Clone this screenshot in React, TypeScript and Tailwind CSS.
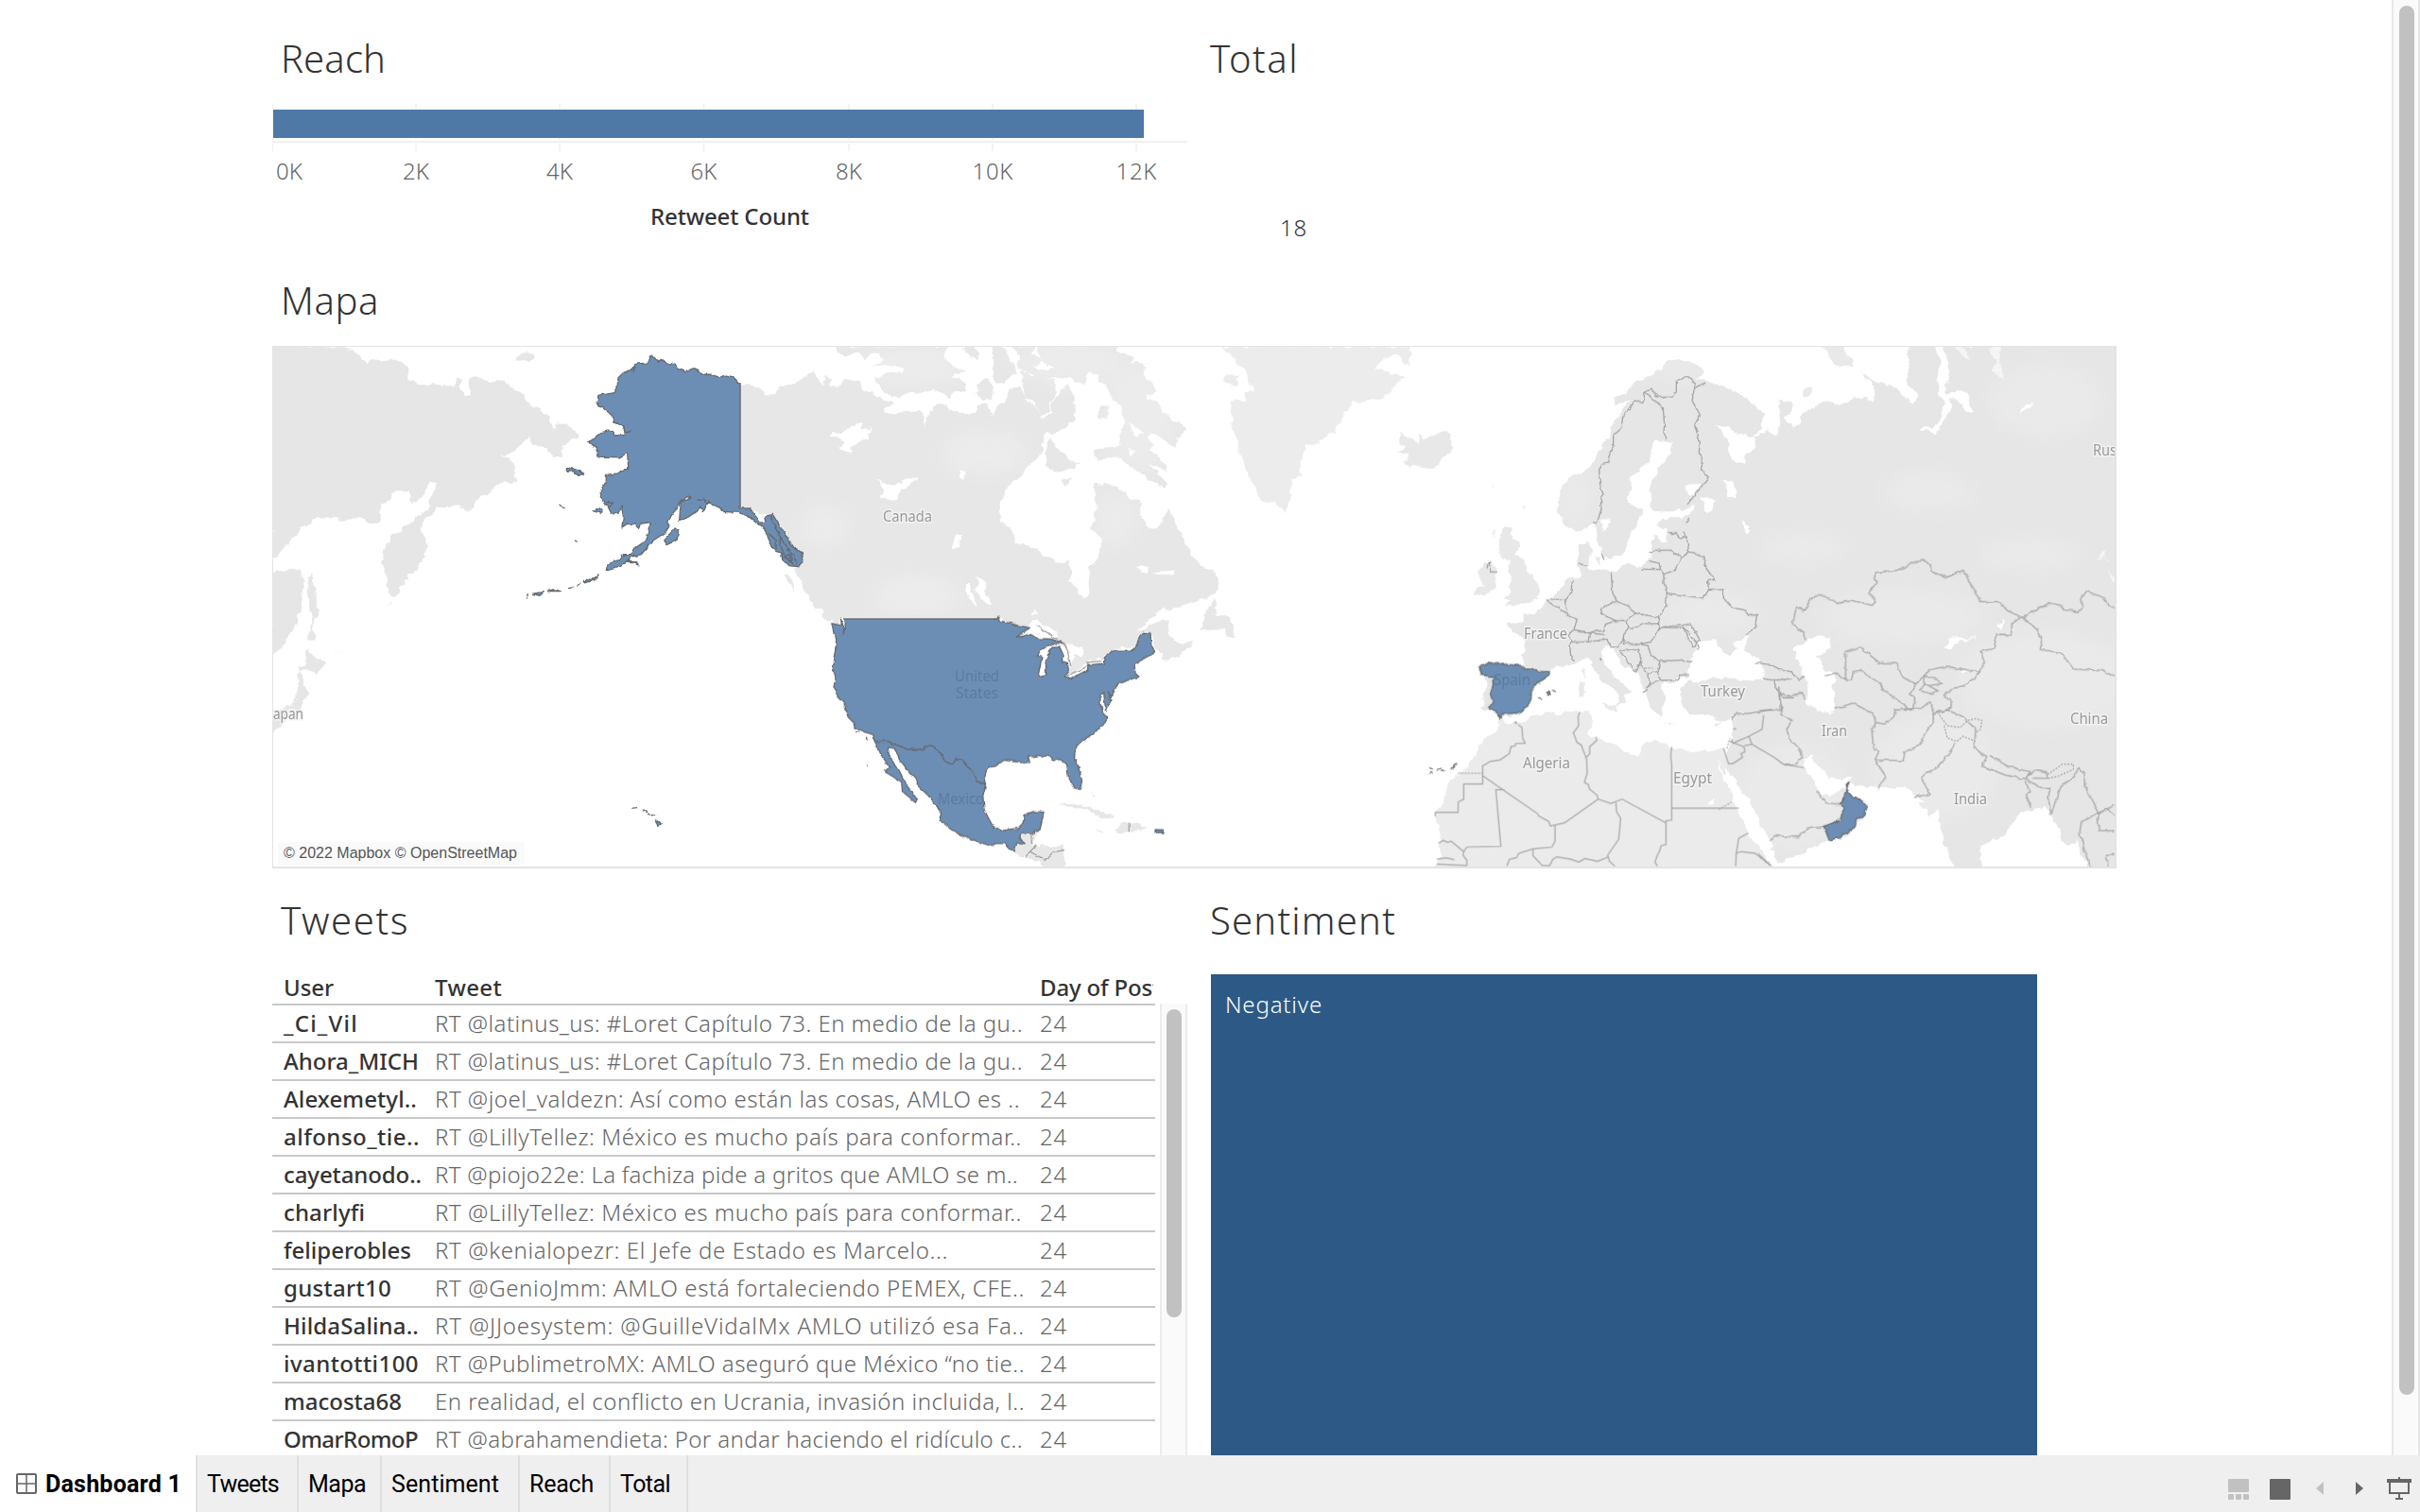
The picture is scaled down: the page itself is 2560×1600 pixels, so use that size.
import { useLayoutEffect, useRef, useState } from "react";

/* Text run whose tracking is adjusted to a given advance width. */
function Fit({ w, className = "", children }: { w: number; className?: string; children: string }) {
  const ref = useRef<HTMLSpanElement>(null);
  const [spacing, setSpacing] = useState(0);
  useLayoutEffect(() => {
    const el = ref.current;
    if (!el) return;
    setSpacing((w - el.getBoundingClientRect().width) / children.length);
  }, []);
  return (
    <span ref={ref} className={"inline-block whitespace-pre " + className} style={{ letterSpacing: spacing }}>
      {children}
    </span>
  );
}

function Title({ w, children }: { w: number; children: string }) {
  return (
    <h2 className="h-[60px] text-[40px] leading-[63px] font-[340] text-[#333]">
      <Fit w={w}>{children}</Fit>
    </h2>
  );
}

const axis: [string, number, number][] = [
  ["0K", 306, 28],
  ["2K", 440, 28],
  ["4K", 592, 28],
  ["6K", 744.5, 28],
  ["8K", 898, 28],
  ["10K", 1050, 43],
  ["12K", 1202, 43],
];
const grid = [288.5, 440, 592, 744.5, 898, 1050, 1202];

function ReachChart() {
  return (
    <svg className="block h-[150px] w-[968px]" viewBox="288 110 968 150">
      {grid.map((x) => (
        <path key={x} d={`M${x} 110V148M${x} 152V160`} stroke="#f0f0f0" strokeWidth="1.5" />
      ))}
      <rect x="288" y="149" width="968" height="2" fill="#f0f0f0" />
      <rect x="289" y="116" width="921" height="30" fill="#4e79a7" />
      {axis.map(([t, x, w]) => (
        <text key={t} x={x - w / 2} y="190" textLength={w} className="text-[24px] font-[350]" fill="#666">
          {t}
        </text>
      ))}
      <text x="688" y="238" textLength="168" className="text-[24px] font-medium" fill="#333">
        Retweet Count
      </text>
    </svg>
  );
}

const A = "translate(270 350) scale(.42092 .3699)";
const B = "translate(860 350) scale(.42092 .3699)";
const C = "translate(1480 350) scale(.33333 .3699)";
const D = "translate(1860 350) scale(.33333 .3699)";

const landA =
  "M40 40L245 50 270 75 280 95 320 83 355 83 383 105 383 140 410 152 450 150 460 155 500 155 505 135 520 142 515 165 525 185 540 185 538 130 560 138 612 142 655 172 700 215 740 245 752 285 758 262 785 268 812 300 775 330 770 365 755 360 730 335 710 330 690 320 685 298 672 325 640 355 618 352 640 365 650 395 662 435 628 430 575 470 535 515 510 500 490 507 455 510 420 550 420 575 432 590 428 640 412 660 410 685 385 690 385 715 362 730 360 750 342 770 332 735 325 660 330 610 345 585 385 555 440 500 435 490 458 435 440 432 430 445 428 470 395 495 385 480 390 460 350 460 320 500 310 545 280 548 270 535 215 540 200 532 150 540 115 565 85 605 40 660ZM40 695L80 680 100 690 110 688 125 710 122 740 108 830 95 855 75 895 40 935ZM140 690L150 720 152 770 163 818 150 820 142 850 153 882 140 890 133 885 140 830 132 760 132 710ZM130 908L150 935 180 950 152 980 125 968 108 980 103 965 125 960ZM112 980L122 990 120 1010 132 1035 118 1060 115 1085 85 1085 78 1120 60 1130 40 1158 40 1120 60 1080 90 1075 108 1040 105 1000ZM655 75L685 57 703 72 690 88 655 88ZM320 796L345 772 342 778ZM180 945L228 906 215 918Z";

const landB =
  "M-183 148L-150 155-112 190-82 162-50 150-32 140 0 112 18 150 28 160 38 120 45 160 65 160 75 140 100 140 120 160 155 185 185 200 205 205 180 225 200 235 245 232 270 230 285 270 290 235 310 215 330 215 350 230 410 235 430 220 455 250 460 215 490 190 495 165 520 160 530 190 540 210 560 215 575 250 597 240 605 190 640 150 655 190 655 250 635 280 600 290 580 300 575 340 555 380 535 385 525 415 500 430 480 465 470 500 470 550 495 560 505 605 530 608 580 640 610 660 645 663 648 715 665 740 682 767 695 755 690 680 720 650 725 600 700 560 712 510 708 435 750 445 765 440 800 480 820 490 825 540 855 570 880 550 892 505 910 550 935 600 945 640 960 660 1000 685 1018 710 1018 750 990 765 930 790 880 795 850 825 810 870 870 830 900 825 895 870 905 890 960 893 930 915 890 945 875 945 880 925 862 915 850 870 830 862 810 900 745 917 728 945 690 948 665 975 635 992 650 950 655 930 640 905 612 892 600 870 560 843 520 850 465 825 70 825 63 838 38 830 3 780-20 750-42 690-37 640-100 530-183 507Z" +
  "M55 44L75 75 115 62 130 75 165 60 175 85 150 95 225 105 228 118 155 132 160 155 200 192 250 180 300 165 320 175 345 190 360 170 385 175 380 150 350 130 385 120 355 105 330 75 335 44ZM415 155L435 135 455 165 450 190 425 200 410 180ZM410 205L440 205 445 235 415 235ZM375 44L400 44 420 62 410 80 385 65ZM445 44L480 44 500 90 510 120 480 150 470 155 448 130 450 90Z" +
  "M490 44L520 70 510 100 545 128 600 138 640 135 640 100 570 115 555 100 575 85 550 65 560 44Z M560 44L575 85 640 130 680 150 700 115 740 155 745 185 780 230 785 265 765 300 770 325 735 335 705 345 715 370 765 360 800 390 830 410 885 455 890 435 860 400 840 380 890 405 880 375 850 340 855 320 840 300 850 290 900 325 910 340 915 310 940 280 900 250 880 240 870 205 835 190 860 175 855 145 830 130 835 95 800 95 805 75 760 60 765 44ZM520 115L600 140 610 165 600 200 590 240 570 240 560 210 530 190 530 150Z" +
  "M595 305L610 315 620 345 640 365 670 385 640 395 610 410 585 385 580 350ZM720 215L745 215 745 245 720 250ZM625 430L650 420 640 440ZM1010 765L1015 780 1005 810 1050 820 1060 878 1035 870 1030 855 970 857 985 810ZM-70 695L-58 700-45 745-65 715Z" +
  "M522 1440L552 1438 560 1430 552 1472 632 1475 628 1540 590 1540 570 1515 540 1508 505 1492 512 1468 530 1467ZM615 1358L650 1348 700 1365 757 1395 720 1395 690 1370 640 1360ZM755 1428L780 1405 815 1408 840 1422 800 1435ZM705 1428L728 1430 720 1435ZM703 1316L712 1333 706 1330Z";

const greenland =
  "M1020 44L1060 75 1060 90 1085 110 1095 140 1105 175 1085 175 1085 195 1055 200 1050 265 1065 300 1072 360 1100 425 1130 490 1160 490 1190 522 1195 490 1205 430 1225 415 1225 375 1240 325 1270 318 1310 290 1335 235 1355 200 1370 215 1440 185 1490 135 1460 120 1410 110 1440 80 1460 60 1500 105 1500 44ZM1035 125L1070 130 1065 160 1035 150Z";

const lakesB =
  "M42 300L75 290 95 270 125 265 120 285 148 280 140 310 110 320 95 348 65 335 85 315 45 305ZM165 480L180 465 165 425 190 445 205 445 240 425 265 420 225 455 215 475 200 488ZM410 700L432 715 435 750 447 785 430 780 410 740ZM380 722L395 722 410 790 395 770ZM375 395L385 405 375 430 365 415ZM360 580L372 590 360 625 348 628 355 600ZM555 793L562 810 550 812ZM810 680L840 670 840 695 820 690ZM855 690L910 685 905 697 870 697ZM505 880L520 856 565 828 608 855 612 880 590 890 550 868ZM640 895L680 910 678 935 655 930 640 912ZM690 945L720 935 728 948 692 955ZM632 992L660 972 688 962 690 970 645 998ZM800 265L830 290 805 305ZM790 335L812 345 800 360Z";

const eurasia =
  "M525 560L510 520 512 455 545 420 600 395 640 340 680 270 700 235 735 200 690 212 685 190 720 180 740 155 790 130 830 115 845 90 880 85 925 85 970 115 960 130 940 140 990 145 1060 170 1130 210 1155 240 1150 280 1120 300 1070 290 1000 262 1045 310 1040 340 1075 385 1095 380 1100 350 1135 335 1130 300 1170 285 1200 300 1210 270 1205 205 1240 205 1245 235 1220 245 1235 270 1270 270 1275 245 1340 205 1400 210 1480 185 1500 205 1505 180 1495 140 1570 160 1640 210 1650 185 1610 150 1620 115 1610 90 1620 40 2290 40 2290 1540 2195 1540 2165 1500 2150 1460 2130 1470 2100 1465 2100 1430 2060 1385 2050 1360 1970 1380 1925 1440 1850 1475 1845 1540 1760 1540 1715 1420 1715 1365 1680 1385 1650 1355 1670 1350 1635 1333 1605 1303 1550 1310 1515 1305 1450 1300 1425 1275 1410 1288 1370 1280 1330 1250 1315 1215 1285 1225 1285 1250 1315 1285 1330 1320 1355 1330 1380 1325 1412 1310 1440 1335 1465 1340 1487 1360 1460 1410 1430 1440 1365 1457 1310 1480 1200 1525 1185 1470 1140 1395 1110 1340 1080 1310 1050 1260 1035 1235 1050 1175 1060 1140 1055 1105 1020 1118 990 1100 920 1098 895 1065 895 1020 925 990 880 1000 860 1010 835 1010 845 1060 830 1105 795 1070 785 1030 760 985 700 945 680 910 655 900 640 920 660 960 705 1010 745 1035 715 1040 715 1065 690 1080 700 1040 640 1000 600 935 570 950 550 955 500 955 475 970 480 985 435 1010 415 1045 405 1075 380 1095 320 1108 290 1085 262 1085 268 1030 275 1000 258 985 255 960 285 948 395 955 400 880 345 850 345 835 395 835 395 808 430 812 455 790 480 765 510 740 530 715 580 705 570 670 570 610 605 600 605 640 600 680 640 685 680 690 720 665 770 680 800 650 800 600 810 580 830 600 850 600 850 570 815 560 835 540 915 530 925 522 940 500 880 515 810 520 800 490 805 420 860 350 870 320 810 315 800 370 735 425 728 490 775 515 760 550 735 580 715 635 660 655 640 630 630 590 620 550 565 575Z";

const islandsC =
  "M0 290L25 300 60 320 65 298 80 315 100 298 135 288 150 290 175 325 170 350 130 375 100 398 45 390 20 380 30 355-10 345 20 335 5 320ZM320 585L345 562 360 570 355 590 385 595 370 640 390 655 420 695 448 730 440 765 400 778 330 795 360 770 335 765 355 745 340 735 360 715 345 690 350 665 325 650 315 620ZM245 685L285 660 310 675 312 740 245 760 240 745 265 725ZM645 1070L690 1070 690 1090ZM568 1005L590 1005 590 1045 572 1045ZM578 970L588 965 585 995ZM620 650L645 645 640 675ZM1000 1130L1025 1122 1015 1135ZM840 1120L885 1123 860 1128ZM300 575L310 570 300 595ZM293 445L300 445 298 450ZM395 500L402 500 397 510Z";

const africa =
  "M320 1110L345 1125 390 1120 430 1100 500 1092 575 1088 605 1090 615 1120 600 1150 625 1165 690 1185 710 1200 760 1218 780 1180 810 1172 860 1190 960 1205 1030 1195 1045 1235 1035 1270 1000 1230 1050 1310 1085 1390 1120 1460 1190 1530 1190 1540 120 1540 135 1450 115 1385 160 1290 200 1265 245 1220 250 1190 305 1145Z";

const watersC =
  "M950 890L1000 885 1010 905 1040 925 1080 915 1065 895 1115 870 1095 910 1140 940 1160 975 1155 1000 1060 995 1000 990 950 1005 915 995 925 950ZM955 470L1000 485 1000 510 975 515ZM1035 425L1060 430 1070 475 1045 480ZM1085 545L1115 565 1105 578ZM910 440L950 435 950 460 920 475ZM640 545L670 545 650 570ZM980 1362L1005 1335 1005 1360Z";

const watersD =
  "M115 905L160 885 185 870 230 880 225 910 185 930 215 975 250 995 245 1010 225 1015 240 1040 240 1090 205 1095 150 1070 160 1020 140 960 120 935ZM565 44L590 44 605 100 595 160 600 180 640 170 665 190 680 240 655 235 650 205 610 190 612 235 585 265 565 295 515 285 520 275 550 280 580 240 590 200 570 180 575 100ZM590 905L605 880 690 880 640 890 600 912ZM640 972L675 970 655 980ZM835 240L850 205 872 198 850 225ZM765 845L780 820 775 850Z";

const novaya = "M200 40L270 40 300 100 260 100 235 95 225 70ZM325 115L360 140 345 145ZM145 165L170 160 165 185 145 188Z";
const watersLightD = "M620 48L650 50 675 80 650 75ZM730 44L770 46 765 90 775 140 740 115 755 90ZM1072 655L1100 630 1115 665 1100 640ZM1115 685L1128 710 1120 720Z";

const bordersEurope =
  "M615 548L628 550 642 510 640 480 648 470 638 440 635 400 645 380 670 375 665 355 680 330 680 300 705 280 710 245 740 215 745 200 775 203 780 178 800 165 820 190 865 190 880 175 880 145 915 130 940 150 930 200 955 240 938 270 955 320 952 350 965 375 958 395 982 420 915 497M780 178L800 190 838 220 842 270 840 290 850 312M940 165L970 148M920 535L913 550M853 580L880 580 890 592 912 590 920 632 895 650 865 628 810 628 797 635M912 590L905 575M793 658L825 665 830 683 768 682M830 683L840 697 875 685 895 650M920 632L965 645 975 680 1002 712 980 715 982 742 965 765 850 750 840 720 840 697M850 750L848 785 825 820 820 838M673 695L678 750 690 773 640 795 645 812 690 830 720 828 750 808 720 785 690 773M750 808L825 820M720 828L725 850 740 852 780 838 820 838 828 848M725 850L712 875 715 893 760 897 800 890 828 848 900 842 950 900 945 912M828 848L895 850M982 742L1030 740 1030 765 1055 790 1100 800 1110 815 1135 812 1130 850 1100 868M900 842L925 838 955 885 935 905 918 880 900 845M550 715L545 750 525 770 535 815 565 825 555 855 595 862 650 858 655 840 690 828M465 770L530 808M480 768L525 770M555 855L535 870 550 890 600 890 605 865 655 870M600 890L660 882 670 905 695 905 712 880M550 890L542 900 545 930 557 945M700 915L760 912 770 945 750 975 700 915M760 897L790 900 800 930 828 945 820 975 790 980 768 960 770 945M828 945L900 942 928 948M820 975L830 1000 800 1010 785 990 790 980M830 1000L885 1000 890 985 920 985M775 1035L800 1010M275 680L290 665 290 690 310 690M568 665L598 672M642 635L650 655M1055 1110L1070 1095 1110 1095 1190 1083M1130 950L1180 955 1210 970 1240 975 1270 998 1285 990M1155 995L1190 1000 1195 1020 1220 1050 1250 1050M1190 1000L1250 995M1205 1015L1210 1085";

const bordersAfrica =
  "M378 1127L390 1135 392 1165 400 1180 370 1181 368 1188 355 1190 350 1210 320 1228 290 1232 265 1245 265 1297 205 1297 205 1340 188 1348 187 1378 115 1378V1388M265 1273L440 1382 443 1388 475 1404 480 1417 525 1408 632 1340 628 1328 605 1312 600 1298 588 1292 597 1265 595 1225 578 1185 565 1178 553 1150 570 1130 568 1105 574 1090M595 1220L605 1210 605 1190 627 1172 625 1162M335 1313L307 1313 323 1475 215 1477 205 1490M632 1340L672 1352 708 1340 847 1408M865 1190L862 1220 865 1240 865 1400 847 1402 847 1470 832 1473 825 1492 820 1500 812 1520 820 1532M865 1366L1078 1366M495 1415L495 1460 485 1477 425 1482 380 1495 372 1508 350 1512 342 1532M688 1350L690 1375 703 1395 697 1455 662 1500 668 1518 685 1532M425 1482L425 1502 455 1530 478 1530 488 1512 500 1505 545 1512 570 1520 590 1510 630 1518 662 1506M125 1466L140 1458 155 1464 165 1460 205 1490 203 1500 215 1515 215 1530 120 1526M120 1512L150 1508 175 1513M1108 1437L1078 1452 1070 1495 1085 1490 1130 1495 1180 1530M1070 1495L1068 1532M1157 1100L1152 1140 1110 1160 1060 1180 1055 1170M1060 1140L1070 1138M1050 1175L1095 1190 1097 1205 1085 1210 1090 1220 1060 1238 1045 1238 1030 1195M1110 1160L1120 1183 1097 1187M1120 1183L1190 1220 1220 1240 1285 1250";

const bordersD =
  "M0 1087L75 1082 75 1095 105 1115 90 1140 98 1165 135 1200 140 1220 120 1240 85 1240M65 1035L75 1082M65 1035L100 1045 140 1035 150 1058M150 885L140 860 108 840 122 790 145 800 165 770 190 755 240 770 250 780 300 772 360 785 375 775 350 750 380 718 365 710 370 692 440 685 515 655 545 665 550 690 600 705 650 685 705 775 765 775 790 800 840 820 880 800 925 778 960 785 970 798 1015 803 1030 790 1025 765 1042 745 1100 765 1110 785 1132 795M840 820L805 835 803 870 755 868 748 910 705 917 718 950 705 975 625 965 600 960 545 970 500 1010 455 990 440 950 385 950 322 905 277 917 277 998 295 998 300 980 325 970 380 1005 400 1030 465 1070 468 1082 490 1085 497 1048 480 1040 500 1010M840 820L885 855 900 880 895 912 960 920 1000 968 1090 972 1132 990M277 998L245 978 213 988M705 975L665 1010 635 1020 595 1035 592 1048 612 1058 612 1080 555 1095 548 1060 520 1080 468 1082 435 1085 430 1105 400 1125 372 1120 365 1095 300 1065 242 1082M510 1030L530 1010 570 1030 545 1038 515 1030M525 1010L530 985 560 995 580 1010 540 1015M372 1120L360 1140 365 1190 382 1205 370 1228 405 1275 380 1310M370 1228L460 1230 465 1205 515 1185 530 1150 555 1120 555 1095 600 1085 650 1105 690 1140 685 1195 725 1218 710 1245 780 1270 852 1285 860 1262 790 1245 735 1215M852 1285L860 1268 880 1258 915 1265 918 1280 870 1280M852 1285L905 1310 925 1310 920 1340 930 1380 960 1305 1000 1275 1018 1250 1035 1270 1035 1300 1065 1350 1078 1380 1025 1405 1020 1440 1040 1500 1055 1533M850 1290L860 1320 850 1325 865 1365M625 1178L605 1210 560 1255 530 1265 520 1285 545 1325 495 1335M1078 1380L1130 1358M1078 1380L1080 1430 1130 1430M1080 1380L1110 1368 1130 1390M1130 1495L1105 1500 1110 1533M185 1315L215 1350 262 1355M208 1418L155 1425 125 1448 50 1445 40 1460M0 1497L40 1530";

const alaska =
  "M1219 148L1218 507 1243 508 1270 550 1285 545 1282 530 1300 525 1350 618 1374 635 1375 660 1365 675 1340 672 1325 655 1322 635 1305 630 1290 595 1282 570 1238 530 1215 520 1172 517 1165 503 1145 497 1140 488 1125 520 1118 500 1112 515 1085 535 1066 542 1068 510 1070 490 1095 478 1085 475 1070 488 1055 515 1045 530 1035 548 1040 560 1030 578 1000 600 970 640 945 648 930 665 895 683 882 683 885 668 915 655 925 640 945 640 950 625 970 610 985 595 988 570 994 548 970 552 965 565 955 550 945 558 935 552 922 562 925 530 920 500 912 520 895 522 885 500 878 495 868 475 868 460 882 430 882 412 912 408 920 400 938 395 935 350 915 362 862 360 860 335 838 320 870 290 897 285 900 300 930 298 925 270 900 262 895 240 860 208 862 185 900 178 910 160 912 135 925 120 945 112 955 95 985 92 998 70 1013 90 1020 82 1035 95 1055 92 1060 108 1080 118 1100 108 1130 125 1150 125 1165 133 1185 127 1200 132 1212 148Z" +
  "M785 392L805 397 828 408 815 415 800 402 785 404ZM848 515L865 507 872 515 868 523ZM765 498L775 507ZM1028 600L1045 580 1055 565 1064 572 1060 595 1035 612ZM825 722L835 710 845 712 865 696 855 712ZM808 728L815 724ZM790 737L800 733ZM735 745L750 740 768 745ZM695 752L725 748 715 758ZM685 753L682 766ZM804 603L808 606ZM936 655L958 665 962 670 945 662ZM1006 1400L1023 1408 1012 1418ZM988 1382L1004 1388ZM975 1373L984 1378ZM948 1366L960 1364Z";

const alaskaInlets =
  "M900 262L925 270 930 290 945 285M950 120L955 100M1110 485L1125 480 1135 495 1145 490M1290 580L1310 600 1308 625M1295 530L1305 560 1325 600 1345 630M1320 615L1330 640 1345 665M1310 570L1320 590 1318 612M1335 625L1355 645 1360 670M1345 640L1350 655 1340 660M1325 650L1340 640 1350 670M880 490L900 495 890 505";

const usa =
  "M47 837L72 843 70 825 78 850 76 868 82 845 80 825 462 825 465 815 472 830 505 840 545 850 510 878 545 868 565 880 600 882 630 893 600 895 570 915 565 930 575 935 566 985 575 990 586 985 585 940 600 905 620 905 630 930 625 945 640 950 642 975 632 990 645 997 690 970 692 955 730 952 732 935 748 917 798 916 812 905 820 875 830 863 848 865 850 900 861 920 835 935 808 955 810 980 818 990 765 1010 755 1035 748 1048 742 1030 748 1060 735 1085 731 1035 722 1040 722 1065 728 1090 738 1105 735 1120 705 1150 660 1190 657 1220 672 1265 676 1290 670 1312 655 1308 642 1275 638 1240 620 1223 605 1230 595 1218 570 1215 540 1220 545 1235 520 1235 480 1228 460 1245 438 1250 430 1280 434 1298 410 1288 398 1258 375 1228 358 1228 350 1242 332 1232 325 1215 303 1190 282 1190 280 1198 238 1198 187 1174 155 1174 148 1155 108 1138 105 1125 88 1105 80 1070 62 1048 52 1018 57 995 50 965 60 900ZM860 1427L880 1428 878 1436 860 1436ZM108 1147L116 1148ZM134 1163L136 1167Z";

const mexico =
  "M155 1174L187 1174 238 1198 280 1198 282 1190 303 1190 325 1215 332 1232 350 1242 358 1228 375 1228 398 1258 410 1288 434 1298 427 1330 430 1370 452 1418 475 1430 515 1423 528 1408 530 1385 555 1375 580 1377 575 1405 570 1428 558 1430 552 1438 522 1440 520 1450 530 1467 512 1468 505 1492 482 1467 460 1467 445 1473 385 1450 345 1425 320 1400 318 1370 290 1330 262 1300 262 1290 235 1255 215 1225 205 1195 188 1192 192 1220 215 1255 235 1300 262 1340 258 1350 225 1318 222 1290 182 1262 193 1248 172 1215ZM136 1240L139 1241ZM179 1256L181 1258Z";

const spain =
  "M255 960L275 957 285 948 300 952 390 958 400 967 435 970 450 975 478 975 475 988 435 1010 415 1040 422 1052 405 1078 380 1093 330 1097 320 1108 305 1085 287 1078 297 1060 288 1035 298 1015 297 1000 307 990 262 985ZM466 1035L475 1030 482 1037 474 1043ZM490 1028L497 1032ZM443 1050L449 1052ZM98 1250L106 1256ZM122 1256L133 1252ZM137 1260L145 1260ZM165 1256L175 1248 182 1238ZM97 1264L102 1266ZM367 1122L369 1124ZM641 941L643 942Z";

const oman =
  "M280 1313L300 1335 325 1340 347 1360 330 1393 310 1395 308 1415 287 1437 268 1440 262 1450 225 1457 208 1418 260 1400 270 1365 262 1355 272 1330ZM279 1295L285 1291 282 1310Z";

function Label({ x, y, w, dark, children }: { x: number; y: number; w?: number; dark?: boolean; children: string }) {
  return (
    <text
      x={x}
      y={y}
      textLength={w}
      lengthAdjust="spacingAndGlyphs"
      className="text-[16px]"
      fill={dark ? "#5a7ba3" : "#999"}
      stroke={dark ? "none" : "#f2f2f2"}
      strokeWidth="3"
      paintOrder="stroke"
    >
      {children}
    </text>
  );
}

function WorldMap() {
  return (
    <div className="relative h-[553px] w-[1951px] overflow-hidden border-t border-r-2 border-b-2 border-l border-[#e4e4e4]">
      <svg className="block h-[550px] w-[1948px]" viewBox="289 367 1948 550">
        <defs>
          <filter id="coast" x="0" y="0" width="100%" height="100%">
            <feTurbulence type="fractalNoise" baseFrequency="0.09" numOctaves="3" seed="4" result="n" />
            <feDisplacementMap in="SourceGraphic" in2="n" scale="9" xChannelSelector="R" yChannelSelector="G" />
          </filter>
          <filter id="fine" x="0" y="0" width="100%" height="100%">
            <feTurbulence type="fractalNoise" baseFrequency="0.15" numOctaves="2" seed="7" result="n" />
            <feDisplacementMap in="SourceGraphic" in2="n" scale="4" xChannelSelector="R" yChannelSelector="G" />
          </filter>
          <filter id="soft" x="-20%" y="-20%" width="140%" height="140%">
            <feGaussianBlur stdDeviation="28" />
          </filter>
          <clipPath id="eu">
            <path d={eurasia} />
          </clipPath>
          <clipPath id="ca">
            <path d={landB} />
          </clipPath>
        </defs>
        <g filter="url(#coast)">
          <rect x="280" y="360" width="1970" height="565" fill="#fff" />
          <g transform={A}>
            <path d={landA} fill="#e6e6e6" />
          </g>
          <g transform={B}>
            <path d={landB} fill="#e7e7e7" />
            <g clipPath="url(#ca)">
              <g fill="#ececec" filter="url(#soft)">
                <ellipse cx="260" cy="760" rx="110" ry="60" />
                <ellipse cx="30" cy="560" rx="60" ry="60" />
                <ellipse cx="430" cy="350" rx="110" ry="60" />
                <ellipse cx="820" cy="250" rx="90" ry="150" />
                <ellipse cx="250" cy="100" rx="140" ry="60" />
                <ellipse cx="640" cy="90" rx="140" ry="60" />
                <ellipse cx="760" cy="540" rx="50" ry="80" />
              </g>
            </g>
            <path d={greenland} fill="#ececec" />
            <path d={lakesB} fill="#fff" />
          </g>
          <g transform={C}>
            <path d={eurasia} fill="#e6e6e6" />
            <g clipPath="url(#eu)">
              <g fill="#eaeaea" filter="url(#soft)">
                <ellipse cx="1680" cy="460" rx="150" ry="60" />
                <ellipse cx="1280" cy="620" rx="150" ry="50" />
                <ellipse cx="2000" cy="640" rx="170" ry="50" />
                <ellipse cx="1600" cy="820" rx="260" ry="80" />
                <ellipse cx="2050" cy="1000" rx="280" ry="140" />
                <ellipse cx="1250" cy="1330" rx="180" ry="150" />
                <ellipse cx="1700" cy="1250" rx="200" ry="150" />
                <ellipse cx="1000" cy="810" rx="150" ry="60" />
                <ellipse cx="560" cy="480" rx="60" ry="90" />
                <ellipse cx="880" cy="110" rx="100" ry="30" />
                <ellipse cx="2050" cy="200" rx="180" ry="110" />
              </g>
            </g>
            <path d={islandsC} fill="#e8e8e8" />
            <path d={africa} fill="#ebebeb" />
            <path d={watersC} fill="#fff" />
          </g>
          <g transform={D}>
            <path d={watersD} fill="#fff" />
            <path d={watersLightD} fill="#f5f5f5" />
            <path d={novaya} fill="#e9e9e9" />
          </g>
        </g>
        <g filter="url(#fine)" fill="none" stroke="#a3a3a3" strokeWidth="1.3">
          <g transform={B}>
            <path vectorEffect="non-scaling-stroke" d="M548 1438L550 1468M562 1472L545 1490 535 1505M545 1490L570 1505 580 1515 605 1492 632 1485M794 1405V1435M560 843L612 882M630 895L640 915 648 960M632 992L690 960 692 948 725 945" />
          </g>
          <g transform={C}>
            <path vectorEffect="non-scaling-stroke" d={bordersEurope} />
          </g>
          <g transform={D}>
            <path vectorEffect="non-scaling-stroke" d={bordersD} />
          </g>
        </g>
        <g fill="none" stroke="#a3a3a3" strokeWidth="1.2">
          <g transform={C}>
            <path vectorEffect="non-scaling-stroke" d={bordersAfrica} />
            <path vectorEffect="non-scaling-stroke" strokeDasharray="2 1.5" d="M187 1266H265M1015 1370L1055 1348M1040 1195L1050 1165M780 965L805 965" />
          </g>
          <g transform={D}>
            <path vectorEffect="non-scaling-stroke" strokeDasharray="2 1.5" d="M575 1100L600 1130 640 1135 665 1115 690 1110 710 1115 705 1140 690 1150M590 1130L600 1165 630 1175 650 1160 690 1175M918 1270L965 1240 1000 1240 1000 1255 950 1275 920 1280" />
          </g>
        </g>
        <g filter="url(#fine)" fill="#6c8eb4" stroke="#65686c" strokeWidth="1.3" strokeLinejoin="round">
          <g transform={A}>
            <path vectorEffect="non-scaling-stroke" d={alaska} />
            <path vectorEffect="non-scaling-stroke" d={alaskaInlets} fill="none" />
          </g>
          <g transform={B}>
            <path vectorEffect="non-scaling-stroke" d={usa} />
            <path vectorEffect="non-scaling-stroke" d={mexico} />
          </g>
          <g transform={C}>
            <path vectorEffect="non-scaling-stroke" d={spain} />
          </g>
          <g transform={D}>
            <path vectorEffect="non-scaling-stroke" d={oman} />
          </g>
        </g>
        {/* Surveyed borders along the 49th parallel and the 141st meridian */}
        <rect x="894" y="651" width="158" height="4" fill="#e8e8e8" />
        <rect x="894" y="655" width="158" height="4" fill="#6c8eb4" />
        <rect x="892" y="654.3" width="162" height="1.4" fill="#65686c" />
        <rect x="783" y="409" width="4" height="126" fill="#e7e7e7" />
        <rect x="779" y="409" width="4" height="126" fill="#6c8eb4" />
        <rect x="782.3" y="405" width="1.4" height="132" fill="#65686c" />
        <Label x={289} y={761} w={32}>apan</Label>
        <Label x={934} y={552} w={52}>Canada</Label>
        <Label x={1010} y={721} w={47} dark>United</Label>
        <Label x={1011} y={739} w={45} dark>States</Label>
        <Label x={992} y={850.5} w={49} dark>Mexico</Label>
        <Label x={1612} y={676} w={46}>France</Label>
        <Label x={1580} y={725} w={39} dark>Spain</Label>
        <Label x={1799} y={737} w={47}>Turkey</Label>
        <Label x={1611} y={813} w={50}>Algeria</Label>
        <Label x={1770} y={829} w={41}>Egypt</Label>
        <Label x={1927} y={779} w={27}>Iran</Label>
        <Label x={2190} y={766} w={40}>China</Label>
        <Label x={2067} y={851} w={35}>India</Label>
        <Label x={2214} y={482} w={25}>Rus</Label>
      </svg>
      <div className="absolute bottom-[2px] left-[5px] flex h-6 w-[260px] items-center bg-[#fafafa]/90 pl-[6px] font-['Liberation_Sans',sans-serif] text-[16px] leading-6 text-[#555]">
        <Fit w={247}>© 2022 Mapbox © OpenStreetMap</Fit>
      </div>
    </div>
  );
}

const rows: [string, number, string, number][] = [
  ["_Ci_Vil", 79, "RT @latinus_us: #Loret Capítulo 73. En medio de la gu..", 622],
  ["Ahora_MICH", 143, "RT @latinus_us: #Loret Capítulo 73. En medio de la gu..", 622],
  ["Alexemetyl..", 141, "RT @joel_valdezn: Así como están las cosas, AMLO es ..", 619],
  ["alfonso_tie..", 144, "RT @LillyTellez: México es mucho país para conformar..", 621],
  ["cayetanodo..", 146, "RT @piojo22e: La fachiza pide a gritos que AMLO se m..", 617],
  ["charlyfi", 86, "RT @LillyTellez: México es mucho país para conformar..", 621],
  ["feliperobles", 135, "RT @kenialopezr: El Jefe de Estado es Marcelo...", 543],
  ["gustart10", 114, "RT @GenioJmm: AMLO está fortaleciendo PEMEX, CFE..", 624],
  ["HildaSalina..", 143, "RT @JJoesystem: @GuilleVidalMx AMLO utilizó esa Fa..", 624],
  ["ivantotti100", 143, "RT @PublimetroMX: AMLO aseguró que México “no tie..", 624],
  ["macosta68", 125, "En realidad, el conflicto en Ucrania, invasión incluida, l..", 624],
  ["OmarRomoP", 142, "RT @abrahamendieta: Por andar haciendo el ridículo c..", 622],
];

function TweetTable() {
  return (
    <div className="flex h-[512px] w-[968px] overflow-hidden text-[24px] whitespace-nowrap">
      <div className="w-[934px]">
        <div className="flex h-9 w-[934px] overflow-hidden border-b-2 border-[#c8c8c8] pl-[12px] leading-[34px] font-medium text-[#333]">
          <div className="w-[160px]"><Fit w={53}>User</Fit></div>
          <div className="w-[640px]"><Fit w={71}>Tweet</Fit></div>
          <div className="w-[120px] overflow-hidden"><Fit w={128}>Day of Post</Fit></div>
        </div>
        {rows.map(([user, uw, tweet, tw]) => (
          <div key={user} className="flex h-10 w-[934px] border-b-2 border-[#c8c8c8] pl-[12px] leading-[38px]">
            <div className="w-[160px] font-medium text-[#333]"><Fit w={uw}>{user}</Fit></div>
            <div className="w-[640px] font-[340] text-[#666]"><Fit w={tw}>{tweet}</Fit></div>
            <div className="font-[340] text-[#666]"><Fit w={29}>24</Fit></div>
          </div>
        ))}
      </div>
      <div className="ml-[5px] mt-[34px] w-[29px] border-x-2 border-[#ececec] bg-[#fafafa] pt-[6px] pl-[5px]">
        <div className="h-[326px] w-4 rounded-full bg-[#c1c1c1]" />
      </div>
    </div>
  );
}

const tabs: [string, string, number][] = [
  ["Tweets", "w-[107px]", 76],
  ["Mapa", "w-[88px]", 61],
  ["Sentiment", "w-[146px]", 114],
  ["Reach", "w-[96px]", 68],
  ["Total", "w-[82px]", 53],
];

function BottomBar() {
  return (
    <footer className="flex h-[60px] bg-[#efefef] font-['Roboto',sans-serif] text-[25px] text-black">
      <div className="flex w-[207px] items-center bg-white pl-[17px]">
        <svg className="h-[22px] w-[22px]" viewBox="0 0 22 22" fill="none" stroke="#666" strokeWidth="2">
          <rect x="1" y="1" width="20" height="20" rx="1" />
          <path d="M11 1v20M1 11h20" strokeWidth="1.5" />
        </svg>
        <Fit w={144} className="ml-[9px] h-[60px] leading-[61px] font-bold">Dashboard 1</Fit>
      </div>
      {tabs.map(([name, cls, w]) => (
        <div key={name} className={"h-[60px] border-l-2 border-[#dfdfdf] pl-[10px] leading-[62px] " + cls}>
          <Fit w={w}>{name}</Fit>
        </div>
      ))}
      <div className="flex grow justify-end border-l-2 border-[#dfdfdf]">
        <svg className="h-[60px] w-[204px]" viewBox="2356 1540 204 60" fill="#666">
          <g fill="#c1c1c1">
            <rect x="2357" y="1565" width="22" height="14" rx="1" />
            <rect x="2357" y="1581" width="6" height="6" rx="1" />
            <rect x="2365" y="1581" width="6" height="6" rx="1" />
            <rect x="2373" y="1581" width="6" height="6" rx="1" />
            <path d="M2458 1568v14l-8-7z" />
          </g>
          <rect x="2401" y="1565" width="22" height="22" rx="1" />
          <path d="M2492 1568v14l8-7z" />
          <rect x="2537" y="1563" width="2" height="3" />
          <rect x="2525" y="1565" width="26" height="4" />
          <path d="M2528 1568v12h20v-12M2538 1580v6M2534 1586h8" fill="none" stroke="#666" strokeWidth="2" />
        </svg>
      </div>
    </footer>
  );
}

export default function App() {
  return (
    <div className="flex h-[1600px] w-[2560px] flex-col overflow-hidden bg-white font-['Noto_Sans','Open_Sans',sans-serif]">
      <div className="flex h-[1540px] overflow-hidden">
        <main className="w-[2530px] pl-[288px]">
          <section className="flex h-[286px] pt-[30px]">
            <div className="w-[992px]">
              <div className="pl-[9px]"><Title w={111}>Reach</Title></div>
              <div className="pt-5"><ReachChart /></div>
            </div>
            <div>
              <Title w={94}>Total</Title>
              <div className="pt-[130px] pl-[74px] text-[24px] leading-[42px] font-[340] text-[#333]"><Fit w={29}>18</Fit></div>
            </div>
          </section>
          <section className="h-[656px]">
            <div className="h-20 pl-[9px]"><Title w={104}>Mapa</Title></div>
            <WorldMap />
          </section>
          <section className="flex">
            <div className="w-[992px]">
              <div className="h-[86px] pl-[9px]"><Title w={136}>Tweets</Title></div>
              <TweetTable />
            </div>
            <div>
              <div className="h-[89px]"><Title w={197}>Sentiment</Title></div>
              <div className="ml-px h-[510px] w-[874px] bg-[#2c5985] pt-[11px] pl-[15px] text-[24px] leading-[42px] font-[340] text-white">
                <Fit w={103}>Negative</Fit>
              </div>
            </div>
          </section>
        </main>
        <aside className="w-[30px] border-r-2 border-l-2 border-[#e8e8e8] bg-[#fafafa] pt-[6px] pl-[6px]">
          <div className="h-[1470px] w-4 rounded-full bg-[#c1c1c1]" />
        </aside>
      </div>
      <BottomBar />
    </div>
  );
}
